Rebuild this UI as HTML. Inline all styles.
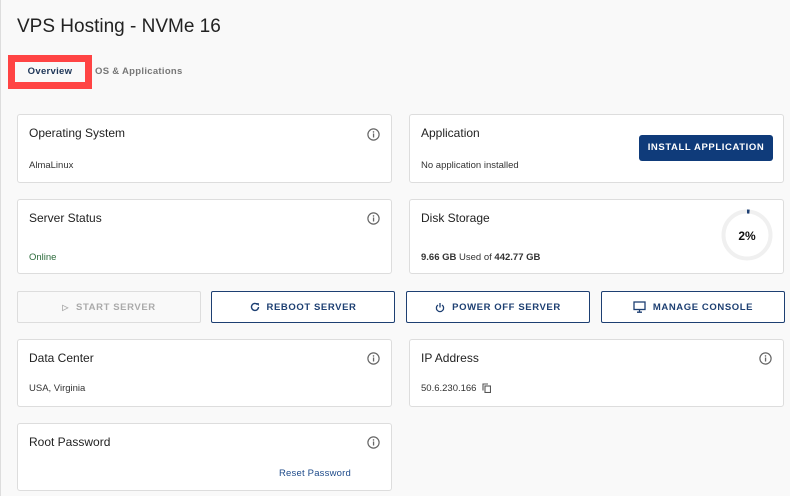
<!DOCTYPE html>
<html><head><style>
*{box-sizing:border-box;margin:0;padding:0}
body{width:790px;height:496px;background:#f9f9f9;font-family:"Liberation Sans",sans-serif;color:#222;position:relative;overflow:hidden}
.a{position:absolute}
.card{position:absolute;background:#fff;border:1px solid #ddd;border-radius:3px}
.t{position:absolute;left:11px;top:11px;font-size:12px;color:#222}
.v{position:absolute;left:11px;font-size:9.5px;color:#333}
.i{position:absolute;width:13px;height:13px}
.btn{position:absolute;top:291px;height:32px;border:1px solid #1d3f72;border-radius:2px;background:#fff;color:#1d3f72;font-size:9.5px;font-weight:bold;letter-spacing:.6px;display:flex;align-items:center;justify-content:center;gap:7px}
</style></head><body>
<div class="a" style="left:0;top:0;width:1px;height:496px;background:#ddd"></div>
<div class="a" style="left:17px;top:16px;font-size:19px;color:#222">VPS Hosting - NVMe 16</div>
<div class="a" style="left:8px;top:55px;width:84px;height:34px;background:#f44;"></div>
<div class="a" style="left:15px;top:62px;width:70px;height:20px;background:#f9f9f9;font-size:9.5px;font-weight:bold;color:#1d3557;text-align:center;line-height:20px;letter-spacing:.3px">Overview</div>
<div class="a" style="left:95px;top:66px;font-size:9.5px;font-weight:bold;color:#777;letter-spacing:.3px">OS &amp; Applications</div>

<svg width="0" height="0" style="position:absolute"><defs><g id="info"><circle cx="6.5" cy="6.5" r="5.6" fill="none" stroke="#666" stroke-width="1.2"/><rect x="5.9" y="5.5" width="1.3" height="4" fill="#666"/><circle cx="6.5" cy="3.9" r=".8" fill="#666"/></g></defs></svg>

<div class="card" style="left:17px;top:114px;width:375px;height:69px"><div class="t">Operating System</div><div class="v" style="top:45px">AlmaLinux</div><svg class="i" style="left:349px;top:13px"><use href="#info"/></svg></div>
<div class="card" style="left:409px;top:114px;width:375px;height:69px"><div class="t">Application</div><div class="v" style="top:45px">No application installed</div>
<div class="a" style="left:229px;top:20px;width:134px;height:26px;background:#0f3b7a;border-radius:3px;color:#fff;font-size:9.5px;font-weight:bold;letter-spacing:.6px;text-align:center;line-height:26px">INSTALL APPLICATION</div></div>

<div class="card" style="left:17px;top:199px;width:375px;height:75px"><div class="t">Server Status</div><div class="v" style="top:52px;color:#2c6b3c">Online</div><svg class="i" style="left:349px;top:12px"><use href="#info"/></svg></div>
<div class="card" style="left:409px;top:199px;width:375px;height:75px"><div class="t">Disk Storage</div><div class="v" style="top:52px"><b>9.66 GB</b> Used of <b>442.77 GB</b></div>
<svg class="a" style="left:311px;top:9px" width="52" height="52"><circle cx="26" cy="26" r="23.5" fill="none" stroke="#f0f0f0" stroke-width="4"/><path d="M26 2.5 A23.5 23.5 0 0 1 28.5 2.6" fill="none" stroke="#1d3f72" stroke-width="4"/><text x="26" y="31" text-anchor="middle" font-size="12" font-weight="bold" font-family="Liberation Sans" fill="#111">2%</text></svg></div>

<div class="btn" style="left:17px;width:184px;border-color:#ddd;color:#aaa;background:#f9f9f9"><span style="font-size:8px">▷</span>START SERVER</div>
<div class="btn" style="left:211px;width:184px"><svg width="10" height="10" viewBox="0 0 10 10"><path d="M8.5 5A3.5 3.5 0 1 1 7.5 2.5" fill="none" stroke="#1d3f72" stroke-width="1.4"/><path d="M6 1L9 1.2 8.7 4z" fill="#1d3f72"/></svg>REBOOT SERVER</div>
<div class="btn" style="left:406px;width:184px"><svg width="10" height="11" viewBox="0 0 10 11"><path d="M3 3A3.6 3.6 0 1 0 7 3" fill="none" stroke="#1d3f72" stroke-width="1.3"/><path d="M5 1V5.5" stroke="#1d3f72" stroke-width="1.3"/></svg>POWER OFF SERVER</div>
<div class="btn" style="left:601px;width:184px"><svg width="13" height="12" viewBox="0 0 13 12"><rect x="1" y="1" width="11" height="7.5" fill="none" stroke="#1d3f72" stroke-width="1.3"/><path d="M6.5 8.5V11M4 11.2H9" stroke="#1d3f72" stroke-width="1.3"/></svg>MANAGE CONSOLE</div>

<div class="card" style="left:17px;top:339px;width:375px;height:68px"><div class="t">Data Center</div><div class="v" style="top:43px">USA, Virginia</div><svg class="i" style="left:349px;top:12px"><use href="#info"/></svg></div>
<div class="card" style="left:409px;top:339px;width:375px;height:68px"><div class="t">IP Address</div><div class="v" style="top:43px">50.6.230.166 <svg width="9" height="10" style="vertical-align:-2px;margin-left:3px"><rect x="3" y="3" width="5.5" height="6.5" fill="none" stroke="#555" stroke-width="1.1"/><path d="M1 7.5V1H6" fill="none" stroke="#555" stroke-width="1.1"/></svg></div><svg class="i" style="left:349px;top:12px"><use href="#info"/></svg></div>

<div class="card" style="left:17px;top:423px;width:375px;height:68px"><div class="t">Root Password</div><svg class="i" style="left:349px;top:12px"><use href="#info"/></svg><div class="a" style="left:261px;top:44px;font-size:9.5px;color:#1d4a8a;letter-spacing:.2px">Reset Password</div></div>
</body></html>
